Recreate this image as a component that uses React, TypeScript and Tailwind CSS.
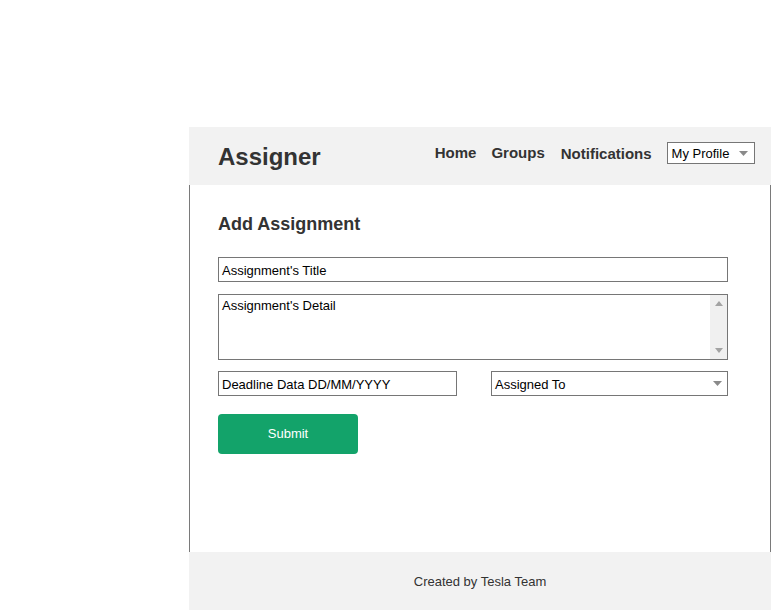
import React from "react";

function Caret({ className = "" }: { className?: string }) {
  return (
    <svg width="9" height="5" viewBox="0 0 9 5" className={className}>
      <path d="M0 0 L9 0 L4.5 5 Z" fill="#8a8a8a" />
    </svg>
  );
}

export default function App() {
  return (
    <div
      className="w-[771px] h-[610px] bg-white"
      style={{ fontFamily: '"Liberation Sans", Arial, sans-serif' }}
    >
      <div className="pt-[127px] pl-[189px]">
        <div className="w-[582px]">
          {/* Header */}
          <div className="h-[58px] bg-[#f2f2f2] flex items-start pl-[29px]">
            <div className="mt-[18px] text-[24px] leading-none font-bold text-[#333]">
              Assigner
            </div>
            <div className="ml-[114px] mt-[18px] text-[15px] leading-none font-bold text-[#333]">
              Home
            </div>
            <div className="ml-[15px] mt-[18px] text-[15px] leading-none font-bold text-[#333]">
              Groups
            </div>
            <div className="ml-[16px] mt-[19px] text-[15px] leading-none font-bold text-[#333]">
              Notifications
            </div>
            <div className="ml-[15px] mt-[15px] w-[88px] h-[22px] border border-[#767676] bg-white flex items-center pl-[4px] pr-[6px]">
              <span className="text-[13px] leading-none text-black flex-1">My Profile</span>
              <Caret />
            </div>
          </div>

          {/* Body */}
          <div className="h-[367px] border-l border-r border-[#7a7a7a] pl-[28px] pt-[30px]">
            <div className="text-[18px] leading-none font-bold text-[#333]">Add Assignment</div>

            <div className="mt-[24px] w-[510px] h-[25px] border border-[#767676] flex items-center pl-[3px] pt-[2px]">
              <span className="text-[13px] leading-none text-black">Assignment's Title</span>
            </div>

            <div className="mt-[12px] w-[510px] h-[66px] border border-[#767676] flex">
              <div className="flex-1 pl-[3px] pt-[3px] text-[13px] leading-[15px] text-black">
                Assignment's Detail
              </div>
              <div className="w-[17px] h-full bg-[#f0f0f0] flex flex-col items-center justify-between py-[6px]">
                <svg width="8" height="5" viewBox="0 0 8 5">
                  <path d="M0 5 L8 5 L4 0 Z" fill="#a3a3a3" />
                </svg>
                <svg width="8" height="5" viewBox="0 0 8 5">
                  <path d="M0 0 L8 0 L4 5 Z" fill="#a3a3a3" />
                </svg>
              </div>
            </div>

            <div className="mt-[11px] w-[510px] flex justify-between">
              <div className="w-[239px] h-[25px] border border-[#767676] flex items-center pl-[3px] pt-[2px]">
                <span className="text-[13px] leading-none text-black">Deadline Data DD/MM/YYYY</span>
              </div>
              <div className="w-[237px] h-[25px] border border-[#767676] flex items-center pl-[3px] pr-[5px]">
                <span className="text-[13px] leading-none text-black flex-1 pt-[2px]">Assigned To</span>
                <Caret />
              </div>
            </div>

            <button className="mt-[18px] w-[140px] h-[40px] rounded-[4px] bg-[#13a36a] text-white text-[13px] leading-none flex items-center justify-center pb-[2px]">
              Submit
            </button>
          </div>

          {/* Footer */}
          <div className="h-[58px] bg-[#f2f2f2] flex items-center justify-center">
            <span className="text-[13px] leading-none text-[#333]">Created by Tesla Team</span>
          </div>
        </div>
      </div>
    </div>
  );
}
